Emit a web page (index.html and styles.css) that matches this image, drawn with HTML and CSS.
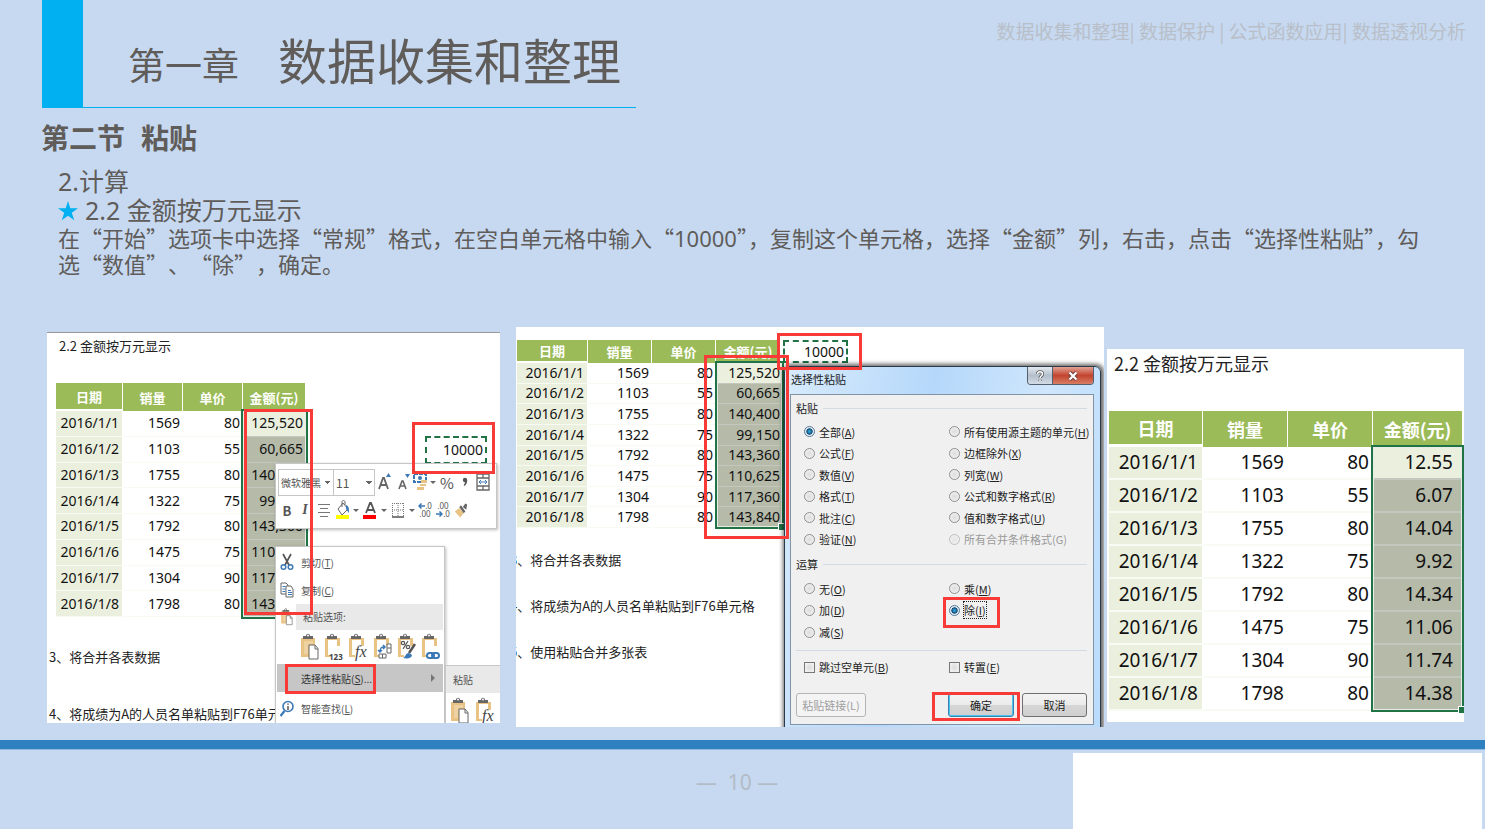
FILE: index.html
```html
<!DOCTYPE html>
<html lang="zh-CN">
<head>
<meta charset="utf-8">
<title>第一章 数据收集和整理</title>
<link rel="stylesheet" href="styles.css">
</head>
<body>
<svg class="sprite" aria-hidden="true">
  <symbol id="clip" viewBox="0 0 20 28">
    <path d="M1 5h14v7h-4v12H1z" fill="#e9c383"/><path d="M4 8h9v3H8v10H4z" fill="#fff" opacity=".25"/>
    <path d="M3 6V3h3c0-3 4-3 4 0h3v3z" fill="#666"/><circle cx="8" cy="2.6" r="1" fill="#fff"/>
  </symbol>
  <symbol id="clip-open" viewBox="0 0 20 28">
    <path d="M1 5h15v8h-3V7H4v15h3v2H1z" fill="#e9c383"/>
    <path d="M3 6V3h3c0-3 4-3 4 0h3v3z" fill="#666"/><circle cx="8" cy="2.6" r="1" fill="#fff"/>
  </symbol>
  <symbol id="paste" viewBox="0 0 20 28">
    <use href="#clip" width="20" height="28"/><path d="M9 12h6l3 3.500V26H9z" fill="#fff" stroke="#666"/><path d="M15 12v4h3" fill="none" stroke="#666"/>
  </symbol>
  <symbol id="link" viewBox="0 0 20 28">
    <use href="#clip-open" width="20" height="28"/>
    <g fill="none" stroke="#3b78b5" stroke-width="2"><rect x="6" y="20" width="7" height="5" rx="2.500"/><rect x="11" y="20" width="7" height="5" rx="2.500"/></g>
  </symbol>
  <symbol id="transpose" viewBox="0 0 20 28">
    <use href="#clip-open" width="20" height="28"/>
    <path d="M14 11h4v9h-4zM14 15h4M6 21h7v4H6zM9.500 21v4" fill="#fff" stroke="#666"/>
    <path d="M7 19c0-4 1-5 4-5M5 17l2 2 2-2M10 12l2 2-2 2" fill="none" stroke="#3b78b5" stroke-width="1.500"/>
  </symbol>
  <symbol id="format" viewBox="0 0 20 28">
    <use href="#clip-open" width="20" height="28"/>
    <g fill="none" stroke="#555" stroke-width="1.200"><circle cx="6" cy="10" r="1.700"/><circle cx="11" cy="14" r="1.700"/><path d="M11 8 6 16"/></g>
    <path d="m18 11-6 9" stroke="#555" stroke-width="2.500"/><path d="M6 25c3-1 2-5 6-5l3 2c0 3-4 4-9 3z" fill="#3b78b5"/>
  </symbol>
  <symbol id="brush" viewBox="0 0 16 18"><path d="m1 10 5-4 5 6-4 5z" fill="#e9c383"/><path d="m6 5 2-2 5 7-2 2zM10 5l3-4 2 1-1 6z" fill="#666"/></symbol>
</svg>

<header class="top">
  <div class="top-mark"></div>
  <h1 class="title"><span class="chapter">第一章</span><span>数据收集和整理</span></h1>
  <p class="trail">数据收集和整理| 数据保护 | 公式函数应用| 数据透视分析</p>
</header>

<main>
  <section class="lesson">
    <h2><span>第二节</span><span>粘贴</span></h2>
    <p class="point"><span class="num">2.</span>计算</p>
    <p class="point"><svg class="star" viewBox="0 0 20 20"><path d="m10 0 2.300 7.200H20l-6.200 4.500 2.400 7.600L10 14.700l-6.200 4.600 2.400-7.600L0 7.200h7.700z" fill="#00b0f0"/></svg><span class="num">2.2 </span>金额按万元显示</p>
    <p class="steps">在“开始”选项卡中选择“常规”格式，在空白单元格中输入“<span class="num">10000</span>”，复制这个单元格，选择“金额”列，右击，点击“选择性粘贴”，勾<span class="loose">选“数值”、“除”，确定。</span></p>
  </section>

  <div class="shots">
    <section class="shot shot-menu">
      <p class="sheet-title">2.2 金额按万元显示</p>
      <div class="grid-wrap">
        <table class="sheet">
          <thead><tr><th>日期</th><th>销量</th><th>单价</th><th>金额(元)</th></tr></thead>
          <tbody>
            <tr><td>2016/1/1</td><td>1569</td><td>80</td><td>125,520</td></tr>
            <tr><td>2016/1/2</td><td>1103</td><td>55</td><td>60,665</td></tr>
            <tr><td>2016/1/3</td><td>1755</td><td>80</td><td>140,400</td></tr>
            <tr><td>2016/1/4</td><td>1322</td><td>75</td><td>99,150</td></tr>
            <tr><td>2016/1/5</td><td>1792</td><td>80</td><td>143,360</td></tr>
            <tr><td>2016/1/6</td><td>1475</td><td>75</td><td>110,625</td></tr>
            <tr><td>2016/1/7</td><td>1304</td><td>90</td><td>117,360</td></tr>
            <tr><td>2016/1/8</td><td>1798</td><td>80</td><td>143,840</td></tr>
          </tbody>
        </table>
        <div class="selection"></div>
      </div>
      <p class="task">3、将合并各表数据</p>
      <p class="task">4、将成绩为A的人员名单粘贴到F76单元格</p>

      <div class="column-edge"></div>
      <div class="copied">10000</div>

      <div class="minibar">
        <div class="minibar-row">
          <select class="font-name" aria-label="字体"><option>微软雅黑</option></select>
          <select class="font-size" aria-label="字号"><option>11</option></select>
          <button class="b20" aria-label="增大字号"><svg width="16" height="20" viewBox="0 0 16 20"><path d="m2 17 4-11h1l4 11M3.500 13h6" fill="none" stroke="#666" stroke-width="1.800"/><path d="m9 5 2.500-4L14 5z" fill="#3b78b5"/></svg></button>
          <button class="b18" aria-label="减小字号"><svg width="16" height="20" viewBox="0 0 16 20"><path d="m3 17 3-8h1l3 8M4.500 14h4" fill="none" stroke="#666" stroke-width="1.600"/><path d="m9 2 2.500 4L14 2z" fill="#3b78b5"/></svg></button>
          <button class="b16" aria-label="会计格式"><svg width="16" height="20" viewBox="0 0 16 20"><path d="M1 2h12v8H1z" fill="none" stroke="#3b78b5" stroke-width="2" stroke-dasharray="4 1"/><circle cx="7" cy="6" r="2" fill="#3b78b5"/><path d="M8 8h6v3H8zM7 12h6v2H7zM4 15h7v3H4z" fill="#e9c383"/></svg></button>
          <button class="b8" aria-label="更多会计格式"><i class="caret"></i></button>
          <button class="b20 pct">%</button>
          <button class="b16" aria-label="千位分隔"><svg width="8" height="10" viewBox="0 0 8 10"><circle cx="4" cy="3" r="2.200" fill="#555"/><path d="M6.200 3c0 3-1 5-3 6l-.5-1C4 7 4 5 4 4z" fill="#555"/></svg></button>
          <button class="b20" aria-label="合并后居中"><svg width="14" height="18" viewBox="0 0 14 18"><path d="M1 1h12v16H1zM1 5h12M1 13h12M7 1v4M7 13v4" fill="none" stroke="#666" stroke-width="1.300"/><path d="M3 9h8M5 7 3 9l2 2M9 7l2 2-2 2" fill="none" stroke="#3b78b5"/></svg></button>
        </div>
        <div class="minibar-row">
          <button class="b18 bold">B</button>
          <button class="b18 ital">I</button>
          <button class="b20" aria-label="居中"><svg width="12" height="14" viewBox="0 0 12 14"><path d="M0 1.500h12M2 5.500h8M0 9.500h12M2 13.500h8" stroke="#777"/></svg></button>
          <button class="b18" aria-label="填充颜色"><svg width="14" height="20" viewBox="0 0 14 20"><path d="m2 9 5-6 5 6-6 6z" fill="#fff" stroke="#666"/><path d="M6 7V2c0-2 3-2 3 0v3" fill="none" stroke="#666"/><path d="M10 5c3 1 3 4 3 8l-3-4z" fill="#3b78b5"/><path d="M0 15h13v4H0z" fill="#ff0"/></svg></button>
          <button class="b8" aria-label="更多填充颜色"><i class="caret"></i></button>
          <button class="b20" aria-label="字体颜色"><svg width="14" height="20" viewBox="0 0 14 20"><path d="m3 13 4-10h1l4 10M4.500 10h6" fill="none" stroke="#555" stroke-width="1.800"/><path d="M0 15h13v4H0z" fill="#f00"/></svg></button>
          <button class="b8" aria-label="更多字体颜色"><i class="caret"></i></button>
          <button class="b20" aria-label="边框"><svg width="12" height="16" viewBox="0 0 12 16"><path d="M.5 1v13M6 1v13M11.500 1v13M0 1.500h12M0 8h12" stroke="#777" stroke-dasharray="1 1"/><path d="M0 15h12" stroke="#555" stroke-width="1.500"/></svg></button>
          <button class="b8" aria-label="更多边框"><i class="caret"></i></button>
          <button class="b18 dec" aria-label="增加小数位数"><span><svg width="7" height="6" viewBox="0 0 7 6"><path d="M7 3H1M3.500.500 1 3l2.500 2.500" fill="none" stroke="#3b78b5" stroke-width="1.500"/></svg>.0</span><span>.00</span></button>
          <button class="b18 dec" aria-label="减少小数位数"><span>.00</span><span><svg width="7" height="6" viewBox="0 0 7 6"><path d="M0 3h6M3.500.500 6 3 3.500 5.500" fill="none" stroke="#3b78b5" stroke-width="1.500"/></svg>.0</span></button>
          <button class="b18" aria-label="格式刷"><svg width="14" height="17"><use href="#brush"/></svg></button>
        </div>
      </div>

      <div class="menu">
        <button class="item"><svg class="ico" viewBox="0 0 14 18"><path d="m3 1 6 11M11 1 5 12" stroke="#555" stroke-width="1.700"/><g fill="none" stroke="#3b78b5" stroke-width="1.500"><circle cx="3.500" cy="14" r="2.300"/><circle cx="10.500" cy="14" r="2.300"/></g></svg><span>剪切(<u>T</u>)</span></button>
        <button class="item"><svg class="ico" viewBox="0 0 14 18"><g fill="#fff" stroke="#666"><path d="M1 2h5l2 2v9H1z"/><path d="M6 5h5l2 3v8H6z"/></g><path d="M2.500 5.500h3M2.500 8h3M2.500 10.500h3M8 9.500h3M8 11.500h4M8 13.500h4" stroke="#3b78b5"/></svg><span>复制(<u>C</u>)</span></button>
        <div class="group-row"><svg class="ico" viewBox="0 0 20 28"><use href="#paste"/></svg><span class="group-name">粘贴选项:</span></div>
        <div class="paste-row">
          <button aria-label="粘贴"><svg class="pi" viewBox="0 0 20 28"><use href="#paste"/></svg></button>
          <button aria-label="值"><svg class="pi" viewBox="0 0 20 28"><use href="#clip-open"/><text x="5" y="27" class="t123">123</text></svg></button>
          <button aria-label="公式"><svg class="pi" viewBox="0 0 20 28"><use href="#clip-open"/><text x="7" y="24" class="tfx">fx</text></svg></button>
          <button aria-label="转置"><svg class="pi" viewBox="0 0 20 28"><use href="#transpose"/></svg></button>
          <button aria-label="格式"><svg class="pi" viewBox="0 0 20 28"><use href="#format"/></svg></button>
          <button aria-label="粘贴链接"><svg class="pi" viewBox="0 0 20 28"><use href="#link"/></svg></button>
        </div>
        <button class="item active"><span class="ico"></span><span>选择性粘贴(<u>S</u>)...</span><i class="arrow"></i></button>
        <button class="item"><svg class="ico" viewBox="0 0 14 18"><circle cx="8" cy="6.500" r="5" fill="#fff" stroke="#3b78b5" stroke-width="1.600"/><path d="m4.500 11-4 5" stroke="#3b78b5" stroke-width="2.200"/><path d="M8 3.500v1.300M8 6v4" stroke="#555" stroke-width="1.500"/></svg><span>智能查找(<u>L</u>)</span></button>
      </div>
      <div class="submenu">
        <p>粘贴</p>
        <div class="sub-icons">
          <button aria-label="粘贴"><svg class="pi" viewBox="0 0 20 28"><use href="#paste"/></svg></button>
          <button aria-label="公式"><svg class="pi" viewBox="0 0 20 28"><use href="#clip-open"/><text x="7" y="24" class="tfx">fx</text></svg></button>
        </div>
      </div>

      <div class="mark mark-amount"></div>
      <div class="mark mark-cell"></div>
      <div class="mark mark-special"></div>
    </section>

    <section class="shot shot-dialog">
      <div class="grid-wrap">
        <table class="sheet">
          <thead><tr><th>日期</th><th>销量</th><th>单价</th><th>金额(元)</th></tr></thead>
          <tbody>
            <tr><td>2016/1/1</td><td>1569</td><td>80</td><td>125,520</td></tr>
            <tr><td>2016/1/2</td><td>1103</td><td>55</td><td>60,665</td></tr>
            <tr><td>2016/1/3</td><td>1755</td><td>80</td><td>140,400</td></tr>
            <tr><td>2016/1/4</td><td>1322</td><td>75</td><td>99,150</td></tr>
            <tr><td>2016/1/5</td><td>1792</td><td>80</td><td>143,360</td></tr>
            <tr><td>2016/1/6</td><td>1475</td><td>75</td><td>110,625</td></tr>
            <tr><td>2016/1/7</td><td>1304</td><td>90</td><td>117,360</td></tr>
            <tr><td>2016/1/8</td><td>1798</td><td>80</td><td>143,840</td></tr>
          </tbody>
        </table>
        <div class="selection"></div>
      </div>
      <p class="task">3、将合并各表数据</p>
      <p class="task">4、将成绩为A的人员名单粘贴到F76单元格</p>
      <p class="task">5、使用粘贴合并多张表</p>
      <div class="copied">10000</div>

      <form class="dialog">
        <div class="dialog-bar">
          <span>选择性粘贴</span>
          <div class="dialog-ctl"><button type="button" class="help" aria-label="帮助"><svg width="10" height="12" viewBox="0 0 10 12"><path d="M2.500 4c0-3 5-3 5 0 0 2-2.500 2-2.500 4M5 9.500v1.500" fill="none" stroke="#555" stroke-width="3"/><path d="M2.500 4c0-3 5-3 5 0 0 2-2.500 2-2.500 4M5 9.500v1.500" fill="none" stroke="#fff" stroke-width="1.500"/></svg></button><button type="button" class="close" aria-label="关闭"><svg width="12" height="10" viewBox="0 0 12 10"><path d="m2.500 1.500 7 7M9.500 1.500l-7 7" stroke="#6b3b3b" stroke-width="4"/><path d="m2.500 1.500 7 7M9.500 1.500l-7 7" stroke="#fff" stroke-width="2.300"/></svg></button></div>
        </div>
        <div class="dialog-body">
          <p class="group-line">粘贴</p>
          <div class="choices choices-paste">
            <label><input type="radio" name="what" checked>全部(<u>A</u>)</label>
            <label><input type="radio" name="what">所有使用源主题的单元(<u>H</u>)</label>
            <label><input type="radio" name="what">公式(<u>F</u>)</label>
            <label><input type="radio" name="what">边框除外(<u>X</u>)</label>
            <label><input type="radio" name="what">数值(<u>V</u>)</label>
            <label><input type="radio" name="what">列宽(<u>W</u>)</label>
            <label><input type="radio" name="what">格式(<u>T</u>)</label>
            <label><input type="radio" name="what">公式和数字格式(<u>R</u>)</label>
            <label><input type="radio" name="what">批注(<u>C</u>)</label>
            <label><input type="radio" name="what">值和数字格式(<u>U</u>)</label>
            <label><input type="radio" name="what">验证(<u>N</u>)</label>
            <label class="off"><input type="radio" name="what" disabled>所有合并条件格式(G)</label>
          </div>
          <p class="group-line">运算</p>
          <div class="choices choices-op">
            <label><input type="radio" name="op">无(<u>O</u>)</label>
            <label><input type="radio" name="op">乘(<u>M</u>)</label>
            <label><input type="radio" name="op">加(<u>D</u>)</label>
            <label><input type="radio" name="op" checked><span class="focus">除(<u>I</u>)</span></label>
            <label><input type="radio" name="op">减(<u>S</u>)</label>
          </div>
          <hr>
          <div class="choices choices-flag">
            <label><input type="checkbox">跳过空单元(<u>B</u>)</label>
            <label><input type="checkbox">转置(<u>E</u>)</label>
          </div>
          <div class="dialog-buttons">
            <button type="button" class="btn btn-link" disabled>粘贴链接(L)</button>
            <button type="button" class="btn btn-ok">确定</button>
            <button type="button" class="btn">取消</button>
          </div>
        </div>
      </form>

      <div class="mark mark-cell"></div>
      <div class="mark mark-amount"></div>
      <div class="mark mark-divide"></div>
      <div class="mark mark-ok"></div>
    </section>

    <section class="shot shot-result">
      <p class="sheet-title">2.2 金额按万元显示</p>
      <div class="grid-wrap">
        <table class="sheet">
          <thead><tr><th>日期</th><th>销量</th><th>单价</th><th>金额(元)</th></tr></thead>
          <tbody>
            <tr><td>2016/1/1</td><td>1569</td><td>80</td><td>12.55</td></tr>
            <tr><td>2016/1/2</td><td>1103</td><td>55</td><td>6.07</td></tr>
            <tr><td>2016/1/3</td><td>1755</td><td>80</td><td>14.04</td></tr>
            <tr><td>2016/1/4</td><td>1322</td><td>75</td><td>9.92</td></tr>
            <tr><td>2016/1/5</td><td>1792</td><td>80</td><td>14.34</td></tr>
            <tr><td>2016/1/6</td><td>1475</td><td>75</td><td>11.06</td></tr>
            <tr><td>2016/1/7</td><td>1304</td><td>90</td><td>11.74</td></tr>
            <tr><td>2016/1/8</td><td>1798</td><td>80</td><td>14.38</td></tr>
          </tbody>
        </table>
        <div class="selection"></div>
      </div>
    </section>
  </div>
</main>

<footer class="foot">
  <span class="page">— &nbsp;10 —</span>
  <div class="blank"></div>
</footer>
</body>
</html>
```

FILE: styles.css
```css
* { box-sizing: border-box; }
body {
  margin: 0;
  min-height: 100vh;
  display: flex;
  flex-direction: column;
  background: #c6d9f1;
  color: #5f5c5a;
  font-family: "Noto Sans CJK SC", sans-serif;
}
h1, h2, p { margin: 0; font-weight: 400; }
button, select, input { font: inherit; color: inherit; margin: 0; }
button { padding: 0; border: 0; background: none; display: flex; align-items: center; justify-content: center; }
.sprite { position: absolute; width: 0; height: 0; }
.num { font-family: "Noto Sans", sans-serif; line-height: 1; }

/* Header */
.top { display: flex; align-items: stretch; padding: 0 19px 0 42px; }
.top-mark { width: 41px; background: #00b0f0; }
.title {
  width: 553px;
  height: 108px;
  padding: 22px 0 0 45px;
  border-bottom: 1px solid #00b0f0;
  display: flex;
  gap: 39px;
  align-items: baseline;
  font-size: 49px;
  line-height: 74px;
  white-space: nowrap;
}
.chapter { font-size: 37px; }
.trail { margin-left: auto; padding-top: 18px; font-size: 19px; line-height: 26px; color: #b9bfc8; }

/* Lesson text */
.lesson { padding: 11px 55px 0 58px; }
.lesson h2 { display: flex; gap: 16px; margin: 0 0 11px -17px; font-size: 28px; line-height: 36px; font-weight: 700; }
.point { font-size: 25px; line-height: 29px; }
.point .num { white-space: pre; }
.star { width: 20px; height: 20px; margin-right: 7px; vertical-align: -1px; }
.steps { font-size: 22px; line-height: 26px; }
.loose { text-spacing-trim: space-all; }

/* Screens */
.shots {
  display: grid;
  grid-template-columns: 466fr 588fr 357fr;
  column-gap: 3px;
  align-items: start;
  padding: 51px 21px 13px 47px;
}
.shot { position: relative; overflow: hidden; background: #fff; color: #222; }
.shot-menu { margin: 5px 13px 0 0; height: 391px; border-top: 1px solid #999; }
.shot-dialog { height: 400px; padding-top: 13px; }
.shot-result { margin-top: 22px; height: 373px; }
.grid-wrap { position: relative; width: max-content; }

.sheet { border-collapse: separate; border-spacing: 0; table-layout: fixed; font-family: "Noto Sans", "Noto Sans CJK SC", sans-serif; }
.sheet th, .sheet td { padding: 0; line-height: 1; white-space: nowrap; }
.sheet th { background: #9bbb59; color: #fff; border-right: 1px solid #fff; font-family: "Noto Sans CJK SC", sans-serif; }
.sheet td { text-align: right; color: #111; border-bottom: 1px solid #f8faf4; }
.sheet td:first-child { background: #ebf0de; border-right: 1px solid #fff; }
.sheet th:first-child { border-bottom: 2px solid #fff; }
.sheet td:last-child { background: #b5baa9; border-bottom-color: #c4c7bd; }
.sheet tr:first-child td:last-child { background: #ebf0de; }
.selection { position: absolute; border: 2px solid #217346; box-shadow: inset 0 0 0 1px #e6ece6; }
.selection::after { content: ""; position: absolute; right: -3px; bottom: -3px; width: 6px; height: 6px; background: #217346; border: solid #fff; border-width: 1px 0 0 1px; }
.copied { position: absolute; border: 2px dashed #217346; text-align: right; color: #111; }
.mark { position: absolute; border: 3px solid #f93b37; }

/* First screen: context menu */
.shot-menu .sheet-title { padding-left: 12px; font-size: 13px; line-height: 26px; }
.shot-menu .grid-wrap { margin: 24px 0 30px 9px; }
.shot-menu .sheet { width: 250px; height: 234px; font-size: 14px; }
.shot-menu .sheet th { width: 60px; height: 28px; font-size: 13px; }
.shot-menu .sheet th:first-child { width: 67px; }
.shot-menu .sheet th:last-child { width: auto; }
.shot-menu .sheet td { padding-right: 3px; }
.shot-menu .selection { left: 185px; top: 26px; width: 67px; height: 210px; }
.shot-menu .task { padding-left: 2px; margin-bottom: 37px; font-size: 13px; line-height: 20px; white-space: nowrap; }
.column-edge { position: absolute; left: 195px; top: -1px; width: 64px; height: 1px; background: #217346; }
.shot-menu .copied { left: 378px; top: 103px; width: 62px; height: 28px; padding-right: 2px; font: 14px/24px "Noto Sans", sans-serif; }
.shot-menu .mark-amount { left: 197px; top: 76px; width: 69px; height: 206px; }
.shot-menu .mark-cell { left: 365px; top: 89px; width: 83px; height: 52px; }
.mark-special { left: 238px; top: 331px; width: 91px; height: 30px; }

.minibar {
  position: absolute; left: 228px; top: 130px; width: 222px; padding: 4px 2px;
  background: #fff; border: 1px solid #c6c6c6; box-shadow: 1px 1px 3px #0004;
  font-size: 11px; color: #555;
}
.minibar-row { display: flex; align-items: center; height: 28px; }
.minibar select {
  appearance: none; height: 27px; padding: 0 0 0 2px; border: 1px solid #c6c6c6; border-radius: 0;
  background-color: #fff;
  background-image: linear-gradient(45deg, transparent 50%, #666 50%), linear-gradient(135deg, #666 50%, transparent 50%);
  background-repeat: no-repeat;
  background-size: 3px 3px;
  background-position: right 5px center, right 2px center;
}
.minibar .font-name { width: 56px; font-size: 10px; }
.minibar .font-size { width: 42px; margin-left: -1px; font-size: 12px; }
.b8 { width: 8px; }
.b16 { width: 16px; }
.b18 { width: 18px; }
.b20 { width: 20px; }
.caret { border: solid transparent; border-width: 3px 3px 0; border-top-color: #666; }
.pct { font-size: 15px; }
.bold { font-weight: 700; font-size: 13px; }
.ital { font: italic 700 14px "Liberation Serif", serif; }
.dec { flex-direction: column; font: 8px/8px "Noto Sans", sans-serif; }
.dec span { white-space: nowrap; }

.menu {
  position: absolute; left: 228px; top: 213px; width: 170px; padding: 1px 1px 0;
  background: #fff; border: 1px solid #c6c6c6; box-shadow: 1px 1px 3px #0004;
  font-size: 10px; color: #555;
}
.item { display: flex; justify-content: flex-start; gap: 7px; width: 100%; height: 28px; text-align: left; }
.ico { width: 14px; height: 18px; margin-left: 3px; flex: none; }
.active { background: #c6c6c6; color: #333; }
.active + .item { height: 33px; }
.arrow { margin: 0 8px 0 auto; border: solid transparent; border-width: 4px 0 4px 4px; border-left-color: #777; }
.group-row { display: flex; align-items: center; gap: 2px; height: 26px; }
.group-name { flex: 1; padding-left: 7px; line-height: 26px; background: #e9e9e9; }
.paste-row { display: grid; grid-template-columns: repeat(6, 1fr); height: 34px; padding-left: 21px; }
.pi { width: 20px; height: 28px; }
.t123 { font: 700 8px "Noto Sans", sans-serif; fill: #444; }
.tfx { font: italic 16px "Liberation Serif", serif; fill: #444; }
.submenu { position: absolute; left: 398px; top: 332px; width: 60px; background: #fff; border: 1px solid #c6c6c6; font-size: 10px; color: #555; }
.submenu p { padding-left: 7px; line-height: 27px; background: #e9e9e9; }
.sub-icons { display: flex; gap: 5px; padding: 4px 0 0 4px; }

/* Second screen: paste special dialog */
.shot-dialog .grid-wrap { margin: 0 0 22px 1px; }
.shot-dialog .sheet { width: 264px; height: 188px; font-size: 14px; }
.shot-dialog .sheet th { width: 64px; height: 23px; font-size: 13px; }
.shot-dialog .sheet th:first-child { width: 71px; }
.shot-dialog .sheet th:last-child { width: auto; }
.shot-dialog .sheet td { padding-right: 3px; }
.shot-dialog .sheet td:last-child { padding-right: 1px; }
.shot-dialog .selection { left: 198px; top: 21px; width: 69px; height: 168px; }
.shot-dialog .task { margin: 0 0 26px -6px; font-size: 13px; line-height: 20px; white-space: nowrap; }
.shot-dialog .copied { left: 267px; top: 13px; width: 65px; height: 23px; padding-right: 2px; font: 14px/20px "Noto Sans", sans-serif; }
.shot-dialog .mark-cell { left: 261px; top: 6px; width: 85px; height: 37px; }
.shot-dialog .mark-amount { left: 188px; top: 28px; width: 85px; height: 184px; }
.mark-divide { left: 427px; top: 270px; width: 57px; height: 31px; }
.mark-ok { left: 416px; top: 365px; width: 88px; height: 29px; }

.dialog {
  position: absolute; left: 268px; top: 39px; width: 317px; padding: 0 6px 8px 5px;
  border: 1px solid #2c3a48; border-radius: 6px 6px 0 0;
  background: linear-gradient(100deg, #d8ebfc, #b5d8fa 40%, #cfe6fc 70%, #b9dbfb);
  box-shadow: 1px 0 4px 2px #0009;
  font-size: 11px; color: #222;
}
.dialog-bar { display: flex; justify-content: space-between; height: 27px; padding-left: 1px; line-height: 25px; }
.dialog-ctl { display: flex; height: 18px; border: 1px solid #55606e; border-top: 0; border-radius: 0 0 4px 4px; overflow: hidden; }
.help { width: 24px; background: linear-gradient(#e3e9f0, #b4bfcc 50%, #d2dbe6); }
.close { width: 41px; background: linear-gradient(#e3a294, #c2452f 50%, #d97d63); border-left: 1px solid #55606e; }
.dialog-body { padding: 3px 6px 7px 5px; background: #f0f0f0; border: 1px solid #8393a6; }
.group-line { display: flex; align-items: center; gap: 5px; line-height: 20px; }
.group-line::after { content: ""; flex: 1; height: 1px; background: #d0dbe5; }
.choices { display: grid; grid-template-columns: 145px 1fr; padding-left: 8px; white-space: nowrap; line-height: 16px; }
.choices label { display: flex; align-items: center; }
.choices-paste { height: 129px; grid-auto-rows: 1fr; margin: 3px 0 4px; }
.choices-op { height: 65px; grid-auto-rows: 1fr; margin: 4px 0 7px; }
.choices input { appearance: none; flex: none; width: 11px; height: 11px; margin-right: 4px; border: 1px solid #8e8f8f; background: radial-gradient(#dcdcdc, #f6f6f6); }
.choices input[type="radio"] { border-radius: 50%; }
.choices input[type="radio"]:checked { border-color: #55779a; background: radial-gradient(#2aa2d8 10%, #15486e 45%, #e4edf3 55%); }
.choices input[type="checkbox"] { border-color: #777; }
.off { color: #9a9a9a; }
.off input { opacity: .5; }
.focus { outline: 1px dotted #222; }
hr { margin: 0; border: 0; height: 1px; background: #d0dbe5; }
.choices-flag { margin: 8px 0 18px; }
.dialog-buttons { display: grid; grid-template-columns: 70px 1fr 66px 65px; column-gap: 8px; }
.btn { height: 24px; border: 1px solid #707070; border-radius: 3px; background: linear-gradient(#f3f3f3, #ebebeb 50%, #d6d6d6 52%, #cfcfcf); }
.btn-link { color: #a0a0a0; border-color: #b5b5b5; background: #f4f4f4; }
.btn-ok { grid-column: 3; border-color: #3c7fb1; box-shadow: inset 0 0 0 1px #48c4f0; }

/* Third screen: result */
.shot-result .sheet-title { padding-left: 7px; font-size: 18px; line-height: 28px; }
.shot-result .grid-wrap { margin: 34px 0 0 2px; }
.shot-result .sheet { width: 354px; height: 300px; font-size: 19px; }
.shot-result .sheet th { width: 85px; height: 36px; font-size: 18px; }
.shot-result .sheet th:first-child { width: 94px; border-bottom-width: 3px; }
.shot-result .sheet th:last-child { width: auto; }
.shot-result .sheet td { padding-right: 4px; border-bottom-width: 2px; }
.shot-result .sheet td:last-child { padding-right: 10px; }
.shot-result .selection { left: 262px; top: 34px; width: 93px; height: 267px; }

/* Footer */
.foot { flex: 1; display: grid; grid-template-columns: 1fr auto 1fr; min-height: 89px; border-top: 9px solid #2f80bf; box-shadow: inset 0 1px #8db9e4; padding: 4px 3px 0 0; }
.page { grid-column: 2; padding: 14px 8px 0 0; font: 21px/30px "Noto Sans", sans-serif; color: #b4bbc6; }
.blank { justify-self: end; width: 409px; max-width: 100%; background: #fff; }
```
